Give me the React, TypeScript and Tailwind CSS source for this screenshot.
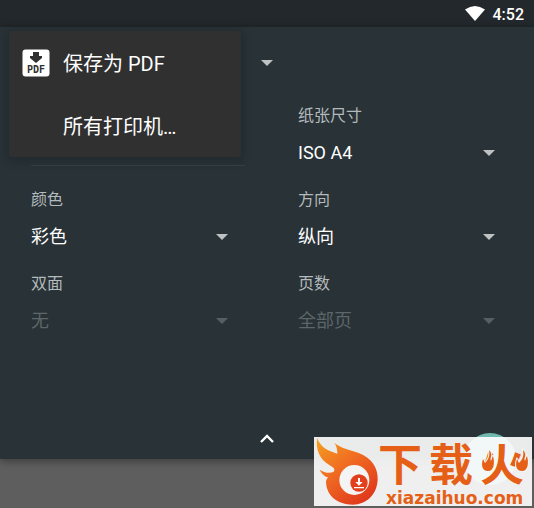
import { useState, type ReactNode } from 'react'

const CJK = "font-['Noto_Sans_CJK_SC',sans-serif]"
const VALUE_FONT = "font-['Roboto','Noto_Sans_CJK_SC',sans-serif]"

type Option = { id: string; label: string; value: string; disabled?: boolean }

const PAPER: Option = { id: 'paper', label: '纸张尺寸', value: 'ISO A4' }
const OPTIONS: Option[] = [
  { id: 'color', label: '颜色', value: '彩色' },
  { id: 'orientation', label: '方向', value: '纵向' },
  { id: 'duplex', label: '双面', value: '无', disabled: true },
  { id: 'pages', label: '页数', value: '全部页', disabled: true },
]

function Arrow({ className }: { className: string }) {
  return (
    <svg viewBox="0 0 12 6" className={`w-3 h-1.5 pointer-events-none ${className}`} aria-hidden="true">
      <path d="M0 0h12L6 6z" fill="currentColor" />
    </svg>
  )
}

function Field({ id, label, children }: { id: string; label: string; children: ReactNode }) {
  return (
    <div className="pl-[31px] pr-[22px]">
      <label htmlFor={id} className={`block h-6 leading-6 text-base text-[#b4b9bb] ${CJK}`}>{label}</label>
      <div className="mt-[9px] h-9">{children}</div>
    </div>
  )
}

function SelectField({ option }: { option: Option }) {
  const { id, label, value, disabled } = option
  return (
    <Field id={id} label={label}>
      <div className="grid items-center h-full">
        <select
          id={id}
          disabled={disabled}
          className={`col-start-1 row-start-1 w-full h-full appearance-none bg-transparent text-lg outline-none disabled:opacity-100 ${VALUE_FONT} ${disabled ? 'text-[#5d6669]' : 'text-white'}`}
        >
          <option>{value}</option>
        </select>
        <Arrow className={`col-start-1 row-start-1 justify-self-end mr-[17px] ${disabled ? 'text-[#566063]' : 'text-[#bec2c3]'}`} />
      </div>
    </Field>
  )
}

function StatusBar() {
  return (
    <header className="flex items-center justify-end gap-2 h-[27px] pr-[10px] bg-[#22282b]">
      <svg viewBox="0 0 20 15" className="w-5 h-[15px]" aria-hidden="true">
        <path d="M0 3.5Q10-3.500 20 3.500L10 15z" fill="#fff" />
      </svg>
      <span className="pt-0.5 font-['Roboto',sans-serif] font-medium text-base leading-none text-white">4:52</span>
    </header>
  )
}

function PdfIcon() {
  return (
    <svg viewBox="0 0 28 28" className="w-7 h-7" aria-hidden="true">
      <rect x="0.5" y="0.5" width="27" height="27" rx="3" fill="#fff" />
      <path d="M11 3h6v4h3v2l-6 5-6-5V7h3z" fill="#303030" />
      <text x="14" y="24" textAnchor="middle" fontFamily="DejaVu Sans Mono" fontSize="10" fontWeight="bold" fill="#303030">PDF</text>
    </svg>
  )
}

function PrinterMenu({ onPick }: { onPick: () => void }) {
  return (
    <ul
      role="menu"
      className={`absolute z-10 left-[9px] top-1 w-[232px] rounded-xs bg-[#303030] shadow-[0_2px_10px_2px_rgba(0,0,0,0.18)] text-xl text-white ${VALUE_FONT}`}
    >
      <li>
        <button role="menuitem" onClick={onPick} className="flex items-center gap-[13px] w-full h-[63px] pl-[13px] text-left">
          <PdfIcon />
          <span className="pt-0.5">保存为 PDF</span>
        </button>
      </li>
      <li>
        <button role="menuitem" onClick={onPick} className="w-full h-[63px] pt-0.5 pl-[54px] text-left">所有打印机…</button>
      </li>
    </ul>
  )
}

function Flame() {
  return (
    <svg viewBox="0 0 210 207" className="w-[70px] h-[69px] shrink-0" aria-hidden="true">
      <defs>
        <linearGradient id="flame" x1="0" y1="0" x2="0.7" y2="1">
          <stop offset="0" stopColor="#f5a01f" />
          <stop offset="0.5" stopColor="#f06a22" />
          <stop offset="1" stopColor="#e03a1c" />
        </linearGradient>
      </defs>
      <path
        d="M10 3C18 30 42 42 70 50C70 38 68 27 61 18C82 34 104 38 134 48C172 62 192 92 191 126C190 172 158 203 116 203C72 203 38 178 36 136C36 130 38 126 42 121C32 119 21 108 17 98C30 107 46 110 58 105C66 96 58 92 46 84C30 74 21 64 15 50C8 35 7 18 10 3Z"
        fill="url(#flame)"
      />
      <circle cx="121" cy="129" r="45" fill="#f3f4f3" />
      <circle cx="135" cy="138" r="26" fill="#e2401d" />
      <path d="M132 123h6v12h8l-11 11-11-11h8zM120 150h30v4h-30z" fill="#fff" />
    </svg>
  )
}

function SmallFlame({ className }: { className: string }) {
  return (
    <svg viewBox="-2 -2 16 26" className={`absolute w-4 h-[26px] ${className}`} aria-hidden="true">
      <path
        d="M7 0C12 5 7 8 9 11C10 9 10 7 11 6C13 13 12 21 6 21C0 21-1 15 1 9C2 10 2 12 3 13C7 9 8 5 7 0Z"
        fill="currentColor"
        stroke="#f2f6f5"
        strokeWidth="2"
        paintOrder="stroke"
      />
    </svg>
  )
}

function Watermark() {
  return (
    <div className="absolute right-0.5 bottom-0.5 flex w-[218px] h-[69px] bg-white/90 text-[#e55f17]">
      <Flame />
      <div className="relative -ml-1.5">
        <p className={`flex gap-[7px] h-[52px] leading-[51px] text-[44px] font-bold whitespace-nowrap ${CJK}`}>
          <span>下</span>
          <span>载</span>
          <span>火</span>
        </p>
        <SmallFlame className="left-[102px] top-[11px]" />
        <SmallFlame className="left-[136px] top-[11px]" />
        <p className="pl-2 leading-[18px] text-[17px] font-bold font-['DejaVu_Sans',sans-serif]">xiazaihuo.com</p>
      </div>
    </div>
  )
}

export default function App() {
  const [menuOpen, setMenuOpen] = useState(true)

  return (
    <div className="relative flex flex-col min-h-screen bg-[#5e5e5e]">
      <StatusBar />

      <main className="relative bg-[#283237] shadow-[0_2px_8px_rgba(0,0,0,0.4)]">
        {menuOpen && <PrinterMenu onPick={() => setMenuOpen(false)} />}

        {/* Destination */}
        <div className="grid items-center h-[72px] w-[273px] mb-[3px]">
          <select
            aria-label="打印机"
            onMouseDown={() => setMenuOpen(true)}
            className={`col-start-1 row-start-1 w-full h-full pl-16 appearance-none bg-transparent text-xl text-white outline-none ${VALUE_FONT}`}
          >
            <option>保存为 PDF</option>
          </select>
          <Arrow className="col-start-1 row-start-1 justify-self-end text-[#bec2c3]" />
        </div>

        {/* Print options */}
        <div className="grid grid-cols-2 gap-y-[15px]">
          <Field id="copies" label="份数">
            <input
              id="copies"
              defaultValue="1"
              className={`block w-full h-[31px] border-b border-[#364147] bg-transparent text-lg text-white outline-none ${VALUE_FONT}`}
            />
          </Field>
          <SelectField option={PAPER} />
          {OPTIONS.map((option) => <SelectField key={option.id} option={option} />)}
        </div>

        <button aria-label="收起" className="flex items-center justify-center w-full h-10 mt-20 pb-0.5">
          <svg viewBox="0 0 14 9" className="w-[14px] h-[9px]" aria-hidden="true">
            <path d="M1 8l6-6 6 6" fill="none" stroke="#fff" strokeWidth="2.4" />
          </svg>
        </button>

        <button aria-label="打印" className="absolute right-[18px] -bottom-[26px] size-[52px] rounded-full bg-[#6fb9ae]" />
      </main>

      <Watermark />
    </div>
  )
}
